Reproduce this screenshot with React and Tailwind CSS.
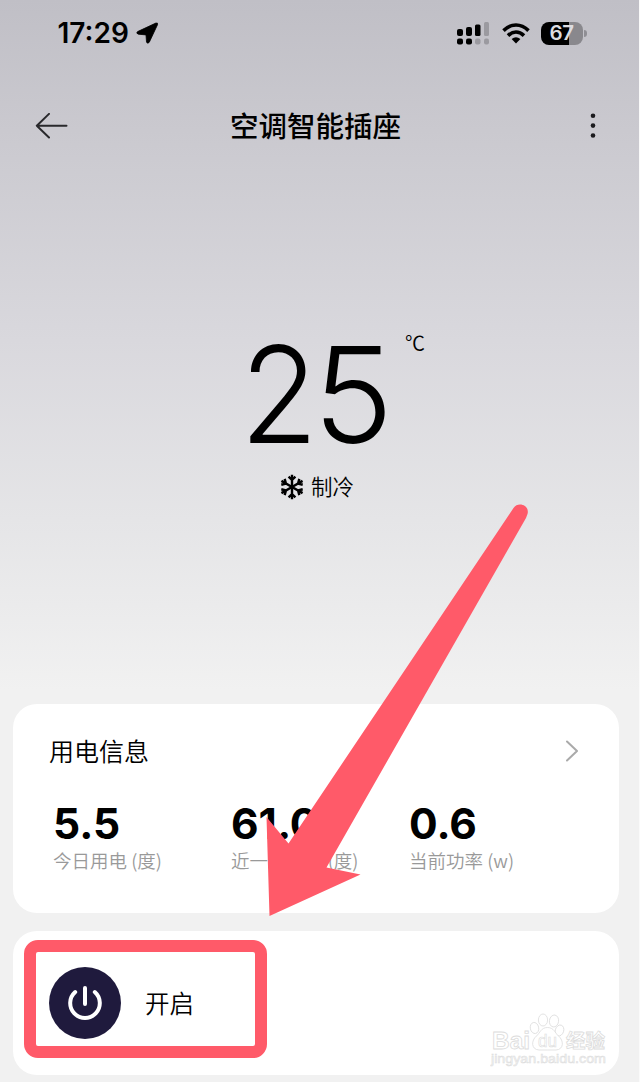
const CJK = "font-['Noto_Sans_CJK_SC',sans-serif]";
const LATIN = "font-['Inter','Noto_Sans_CJK_SC',sans-serif]";

function StatusBar() {
  return (
    <div className="flex h-[66px] items-center pl-[57.5px] pr-[52px]">
      <span className={`${LATIN} text-[28px] font-semibold leading-none tracking-[0px]`}>17:29</span>
      <svg className="ml-[7px]" width="23" height="23" viewBox="0 0 23 23" stroke="#000" strokeWidth="0.8" strokeLinejoin="round">
        <path d="M1.6 9.6 19.8 1.1Q22.2.4 21.5 2.7L13.3 20.2Q11.4 22.4 10.5 20L10 12.9 2.4 12.2Q-.4 11.3 1.6 9.6Z" />
      </svg>
      <svg className="ml-auto" width="33" height="24" viewBox="0 0 33 24">
        <rect x="0" y="8" width="6" height="7" rx="2" />
        <rect x="9" y="6" width="6" height="9" rx="2" />
        <rect x="18" y="3.5" width="5.5" height="11.5" rx="1.5" />
        <rect x="27" y="1" width="5" height="14" rx="1.5" fill="#9b9aa0" />
        <rect x="0" y="17.5" width="6" height="6" rx="2" />
        <rect x="9" y="17.5" width="6" height="6" rx="2" />
        <rect x="18" y="17.5" width="5.5" height="6" rx="2" fill="#9b9aa0" />
        <rect x="27" y="17.5" width="5" height="6" rx="2" fill="#9b9aa0" />
      </svg>
      <svg className="ml-[12px]" width="28" height="21" viewBox="0 0 28 21" fill="none" stroke="#000" strokeWidth="3.6">
        <path d="M1.5 7.6Q7.2 2 14 2T26.5 7.6" />
        <path d="M6 12.6Q9.8 9 14 9T22 12.6" />
        <path d="M14 20.5 9.6 16Q14 12.6 18.4 16Z" fill="#000" stroke="none" />
      </svg>
      <div className="ml-[11px] flex items-center">
        <div className={`${LATIN} flex h-[23px] w-[42px] items-center justify-center rounded-[8px] bg-[linear-gradient(90deg,#000_67%,#89888d_67%)] pr-[1px] pt-[1px] text-[20.5px] font-semibold leading-none tracking-[-0.5px] text-[#dddce0]`}>
          67
        </div>
        <div className="ml-[1px] h-[7px] w-[3px] rounded-r-full bg-[#8f8e94]" />
      </div>
    </div>
  );
}

function Header() {
  return (
    <header className="flex h-[120px] items-center justify-between pl-[35px] pr-[43px]">
      <svg width="33" height="26" viewBox="0 0 33 26" fill="none" stroke="#29292c" strokeWidth="2" strokeLinecap="round" strokeLinejoin="round">
        <path d="M31.5 12.7H1.8M14 .9 1.8 12.7 14 24.5" />
      </svg>
      <h1 className={`${CJK} mb-[2px] mr-[27px] text-[28.5px] font-medium leading-none`}>空调智能插座</h1>
      <svg width="6" height="26" viewBox="0 0 6 26" fill="#1b1b1e">
        <circle cx="3" cy="2.8" r="2.3" />
        <circle cx="3" cy="12.6" r="2.3" />
        <circle cx="3" cy="22.5" r="2.3" />
      </svg>
    </header>
  );
}

function Snowflake() {
  return (
    <svg width="26" height="26" viewBox="-13 -13 26 26" fill="none" stroke="#000" strokeWidth="2.4" strokeLinejoin="round">
      {[0, 60, 120, 180, 240, 300].map((a) => (
        <path key={a} transform={`rotate(${a})`} d="M0 0V-12.2M-3.4-10.4 0-7 3.4-10.4" />
      ))}
    </svg>
  );
}

function Temperature() {
  return (
    <section className="flex h-[518px] flex-col pt-[145px]">
      <div className="flex items-start pl-[240px]">
        <div className={`${LATIN} flex w-[165px] text-[134px] font-light leading-[126px]`}>
          <span className="w-[73px] origin-left scale-x-[0.95]">2</span>
          <span className="origin-left scale-x-[1.01]">5</span>
        </div>
        <span className={`${CJK} text-[20px] font-[350] leading-[24px]`}>℃</span>
      </div>
      <div className="mt-[17px] flex items-center gap-[6px] pl-[279px]">
        <Snowflake />
        <span className={`${CJK} -mt-[3px] text-[21.5px] font-[350] leading-[24px]`}>制冷</span>
      </div>
    </section>
  );
}

function Stat({ value, label }) {
  return (
    <div className="w-[178px] shrink-0 whitespace-nowrap">
      <div className={`${LATIN} text-[42.5px] font-bold leading-[44px]`}>{value}</div>
      <div className={`${CJK} mt-[1px] text-[18.5px] font-[350] leading-[26px] text-[#999]`}>{label}</div>
    </div>
  );
}

function UsageCard() {
  return (
    <section className="mx-[13px] mr-[20px] h-[209px] rounded-[24px] bg-white pl-[36px] pr-[41px] pt-[30px]">
      <div className="flex h-[32px] items-center justify-between">
        <h2 className={`${CJK} text-[25px] font-[350] leading-[32px]`}>用电信息</h2>
        <svg className="mt-[2px]" width="12" height="22" viewBox="0 0 12 22" fill="none" stroke="#aaa" strokeWidth="2" strokeLinecap="round" strokeLinejoin="round">
          <path d="M1 1.5 11 11 1 20.5" />
        </svg>
      </div>
      <div className="mt-[36px] flex pl-[4px]">
        <Stat value="5.5" label="今日用电 (度)" />
        <Stat value="61.0" label="近一月用电 (度)" />
        <Stat value="0.6" label="当前功率 (w)" />
      </div>
    </section>
  );
}

function Watermark() {
  return (
    <svg className="absolute bottom-[6px] right-[11px]" width="118" height="56" viewBox="0 0 118 56" fill="#fff" stroke="#dcdcdc" strokeWidth="0.8">
      <g className="font-['Liberation_Sans',sans-serif]">
        <text x="2" y="35.5" fontSize="24" fontWeight="700" textLength="38" lengthAdjust="spacingAndGlyphs">Bai</text>
        <ellipse cx="44.5" cy="15" rx="4.2" ry="5.6" transform="rotate(-12 44.5 15)" />
        <ellipse cx="53" cy="7" rx="4.6" ry="6" />
        <ellipse cx="64" cy="8" rx="4.6" ry="6" transform="rotate(8 64 8)" />
        <ellipse cx="69.5" cy="17.5" rx="4.2" ry="5.6" transform="rotate(18 69.5 17.5)" />
        <path d="M57.5 14.5C51 14.5 50 20 46.500 23C41 27.500 41 36.500 49 37C54 37 61 37 66 37C74 36.500 74 27.500 68.500 23C65 20 64 14.500 57.500 14.500Z" />
        <text x="48" y="34" fontSize="18" textLength="19" lengthAdjust="spacingAndGlyphs" strokeWidth="0.6">du</text>
        <text x="1" y="50" fontSize="13.5" textLength="115" lengthAdjust="spacingAndGlyphs" fill="#f4f4f4" strokeWidth="0.5">jingyan.baidu.com</text>
      </g>
      <text x="76" y="35" fontSize="19.5" fontWeight="700" className="font-['Noto_Sans_CJK_SC',sans-serif]">经验</text>
    </svg>
  );
}

function PowerCard() {
  return (
    <section className="relative ml-[13px] mr-[20px] mt-[18px] flex h-[144px] items-center rounded-[24px] bg-white pl-[36px]">
      <button className="flex size-[72px] items-center justify-center rounded-full bg-[#1f1a3d]">
        <svg width="36" height="36" viewBox="0 0 36 36" fill="none" stroke="#fff" strokeWidth="4" strokeLinecap="round">
          <path d="M18 3V19M8.2 7A14.8 14.8 0 1 0 27.8 7" />
        </svg>
      </button>
      <span className={`${CJK} ml-[24px] text-[24.5px] font-[350] leading-none`}>开启</span>
      <div className="absolute left-[11px] top-[9px] h-[118px] w-[243px] rounded-[14px] border-[12px] border-[#ff5a69]" />
      <Watermark />
    </section>
  );
}

export default function App() {
  return (
    <div className="h-[1082px] w-[640px] bg-[#fafafa] text-black">
      <main className="relative h-[1082px] w-[639px] overflow-hidden bg-[linear-gradient(180deg,#c0bfc6_0px,#cac9cf_130px,#d9d8dd_340px,#e5e5e7_520px,#f1f1f1_690px)]">
        <StatusBar />
        <Header />
        <Temperature />
        <UsageCard />
        <PowerCard />
        <svg className="absolute left-0 top-0" width="639" height="1082" viewBox="0 0 639 1082" fill="#ff5a69">
          <path d="M513.5 508C518 501 530 505 527.5 514L526 518 326.5 867.5 360.5 874.5 269.5 916 266.5 817 288.5 843.5Z" />
        </svg>
      </main>
    </div>
  );
}
